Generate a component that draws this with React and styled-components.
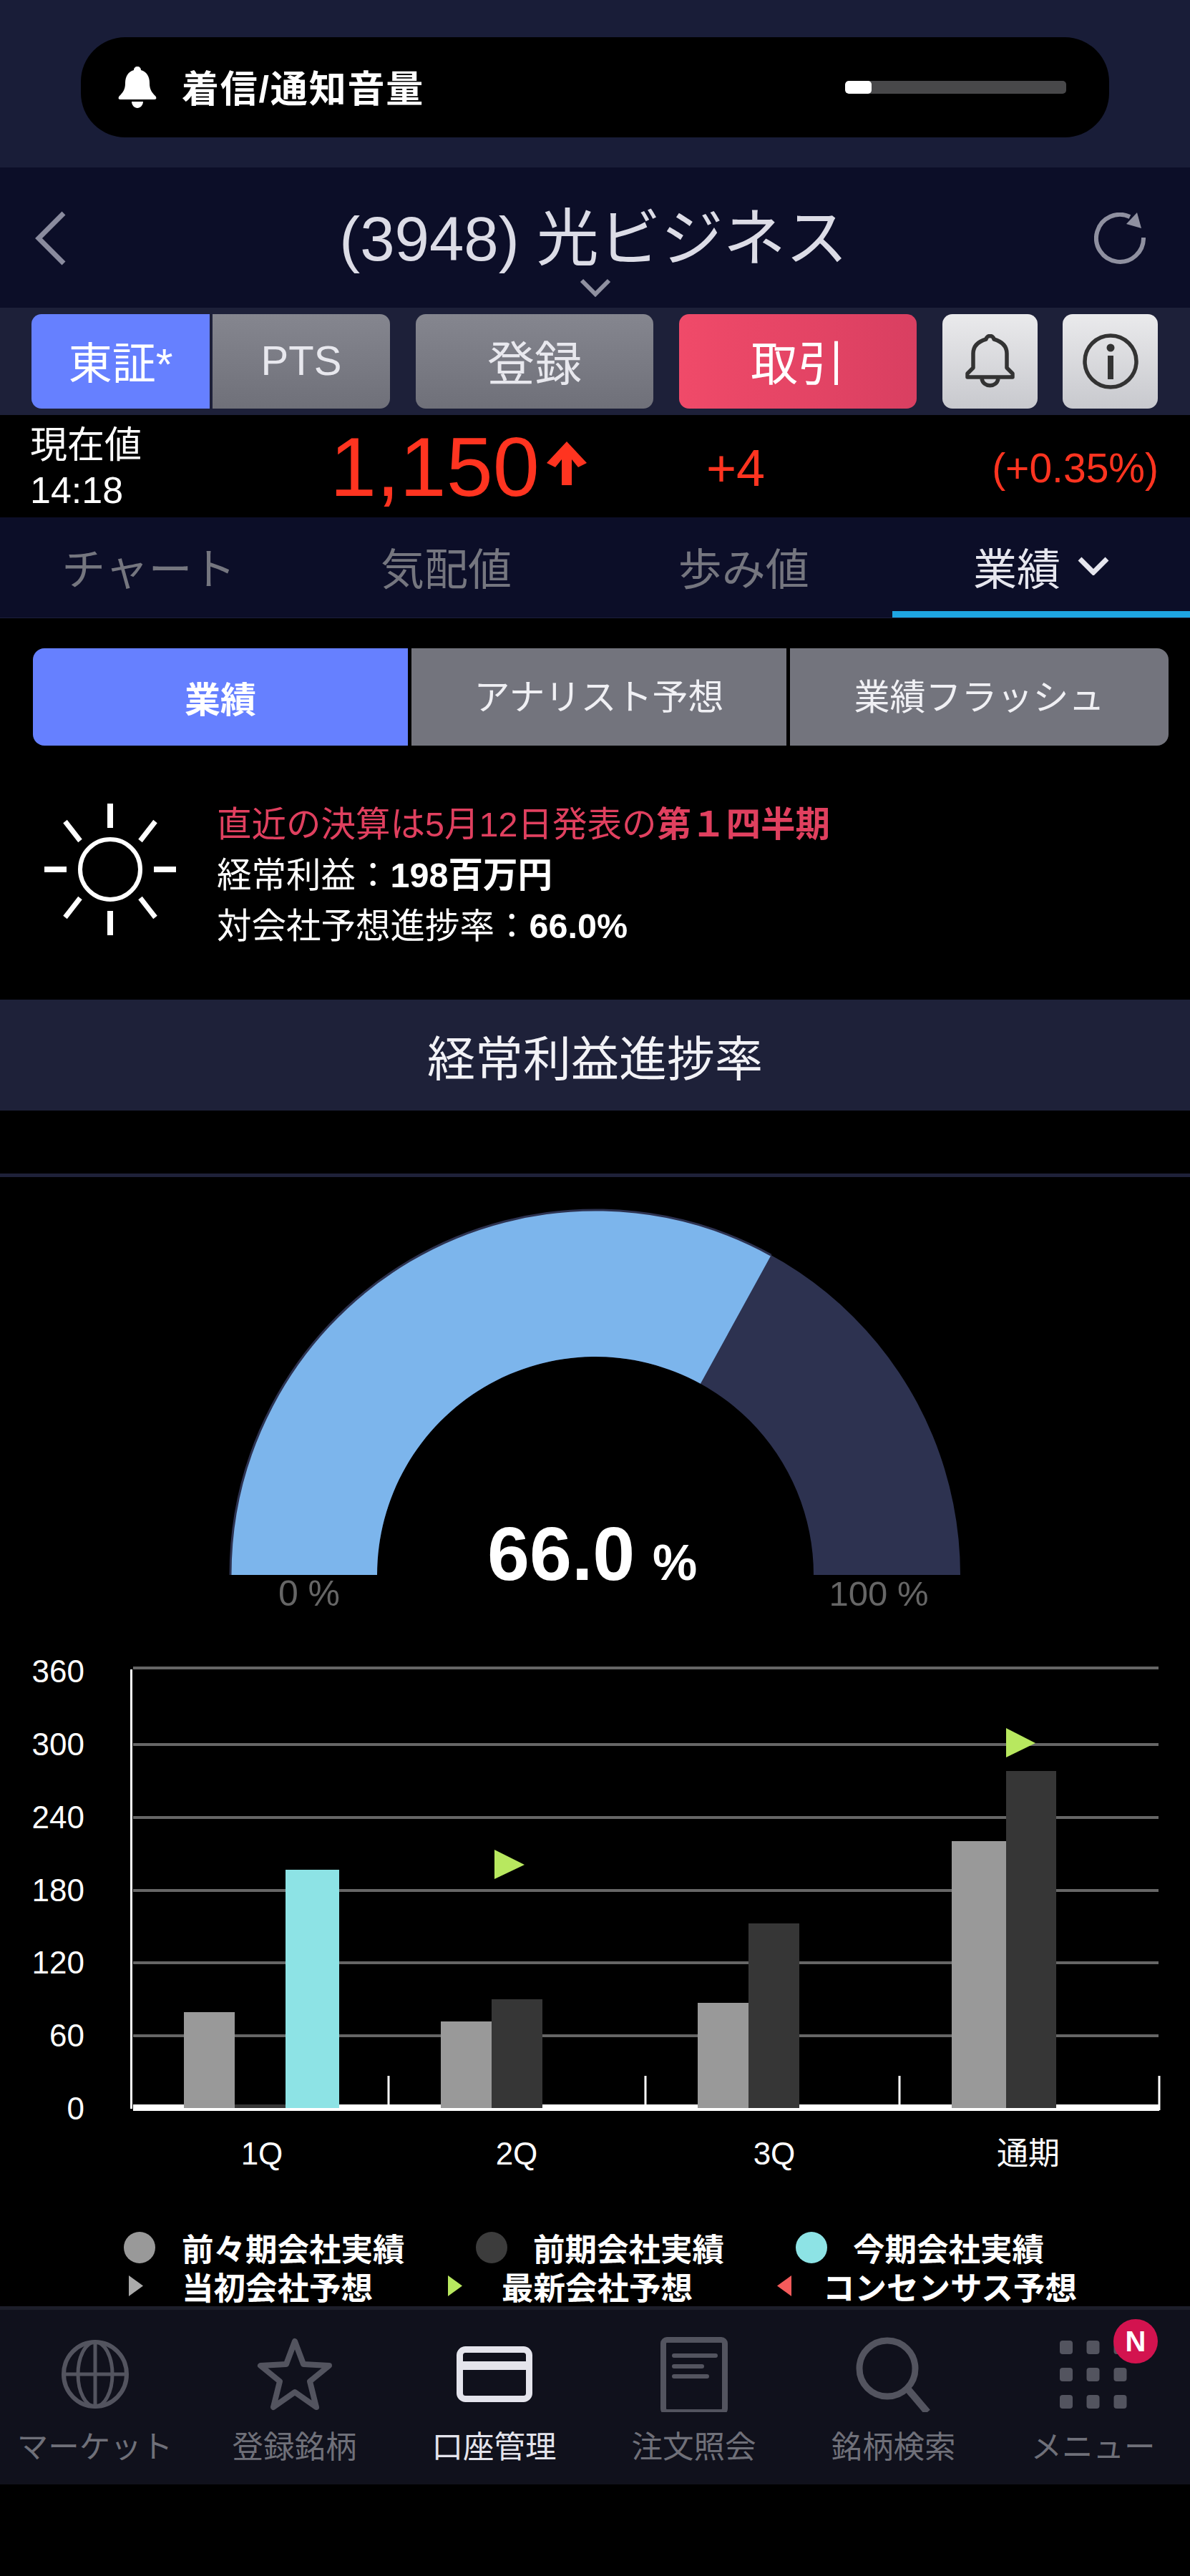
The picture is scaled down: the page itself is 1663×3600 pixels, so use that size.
import styled, { createGlobalStyle } from 'styled-components';

const FONT = '"Liberation Sans", "Noto Sans CJK JP", sans-serif';

const GlobalStyle = createGlobalStyle`
  html, body {
    margin: 0;
    background: #000;
  }
  body {
    font-family: ${FONT};
    color: #fff;
  }
  * {
    box-sizing: border-box;
  }
`;

const Page = styled.div`
  width: 1663px;
  min-height: 3600px;
  background: #000;
`;

/* ---- volume banner ---- */
const TopBand = styled.div`
  height: 234px;
  padding: 52px 113px 0;
  background: #191d38;
`;

const VolumePill = styled.div`
  height: 140px;
  display: flex;
  align-items: center;
  padding: 0 60px 0 51px;
  border-radius: 62px;
  background: #000;
`;

const VolumeText = styled.span`
  margin: 0 0 4px 34px;
  font-size: 52px;
  font-weight: 700;
  letter-spacing: 1.8px;
  white-space: nowrap;
`;

const VolumeTrack = styled.div`
  width: 309px;
  height: 18px;
  margin-left: auto;
  border-radius: 5px;
  background: #48484a;
  overflow: hidden;
`;

const VolumeFill = styled.div`
  height: 100%;
  border-radius: 5px;
  background: #fff;
`;

/* ---- stock header ---- */
const Header = styled.div`
  height: 196px;
  display: grid;
  grid-template-columns: 1fr auto 1fr;
  padding: 45px 62px 0;
  background: #0c0e28;
`;

const BackIcon = styled.svg`
  width: 44px;
  height: 76px;
  margin: 16px 0 0 -14px;
  justify-self: start;
`;

const RefreshIcon = styled.svg`
  width: 72px;
  height: 72px;
  margin-top: 18px;
  justify-self: end;
`;

const TitleColumn = styled.div`
  display: flex;
  flex-direction: column;
  align-items: center;
`;

const StockTitle = styled.div`
  margin-right: 4px;
  font-size: 87px;
  line-height: 110px;
  color: #dcdce6;
  white-space: nowrap;
`;

const ChevronSmall = styled.svg`
  width: 44px;
  height: 26px;
`;

/* ---- action buttons ---- */
const ActionRow = styled.div`
  height: 150px;
  display: flex;
  padding: 9px 45px 0 44px;
  background: #1d2039;
`;

const ActionButton = styled.div`
  width: ${(p) => p.$width}px;
  height: 132px;
  margin-left: ${(p) => p.$gap || 0}px;
  padding-bottom: ${(p) => (p.$tone === 'light' ? 0 : 4)}px;
  display: flex;
  align-items: center;
  justify-content: center;
  font-size: ${(p) => p.$size || 66}px;
  color: ${(p) => (p.$tone === 'gray' ? '#e8e8ee' : '#fff')};
  border-radius: ${(p) => p.$radius || '14px'};
  background: ${(p) =>
    p.$tone === 'blue'
      ? '#6680ff'
      : p.$tone === 'red'
        ? 'linear-gradient(90deg, #f04a69, #d93f61)'
        : p.$tone === 'light'
          ? 'linear-gradient(180deg, #eaeaec, #c8c9ce)'
          : 'linear-gradient(180deg, #85868f, #6f7079)'};
`;

/* ---- price row ---- */
const PriceRow = styled.div`
  height: 143px;
  display: grid;
  grid-template-columns: 419px 526px 1fr;
  align-items: center;
  padding: 0 44px 0 42px;
  background: #000;
`;

const PriceLabel = styled.div`
  font-size: 52px;
  line-height: 63px;
  margin-top: 5px;
`;

const PriceValue = styled.div`
  display: flex;
  align-items: center;
  margin-top: 3px;
  font-size: 117px;
  line-height: 130px;
  color: #ff3420;
`;

const UpArrow = styled.svg`
  width: 56px;
  height: 61px;
  margin: 0 0 12px 10px;
`;

const ChangeGroup = styled.div`
  display: flex;
  justify-content: space-between;
  align-items: center;
  margin-top: 4px;
  color: #ff3420;
`;

const ChangeValue = styled.span`
  font-size: ${(p) => p.$size}px;
`;

/* ---- tabs ---- */
const TabRow = styled.div`
  height: 141px;
  display: grid;
  grid-template-columns: repeat(4, 1fr);
  background: #0c0e28;
  border-bottom: 1px solid #1c1f3b;
`;

const Tab = styled.div`
  display: flex;
  align-items: center;
  justify-content: center;
  gap: 24px;
  padding-top: 5px;
  font-size: 61px;
  color: ${(p) => (p.$active ? '#e6e6ee' : '#75767f')};
  border-bottom: 9px solid ${(p) => (p.$active ? '#1ea5e2' : 'transparent')};
`;

const TabChevron = styled.svg`
  width: 44px;
  height: 26px;
`;

/* ---- segment ---- */
const Segment = styled.div`
  display: flex;
  gap: 5px;
  margin: 42px 30px 0 46px;
`;

const SegmentItem = styled.div`
  width: ${(p) => p.$width}px;
  height: 136px;
  display: flex;
  align-items: center;
  justify-content: center;
  font-size: 50px;
  font-weight: ${(p) => (p.$active ? 700 : 400)};
  color: ${(p) => (p.$active ? '#fff' : '#f0f0f4')};
  padding-bottom: ${(p) => (p.$active ? 0 : 8)}px;
  background: ${(p) => (p.$active ? '#6680ff' : '#73747d')};
  border-radius: ${(p) => p.$radius};
`;

/* ---- info ---- */
const InfoBlock = styled.div`
  height: 355px;
  display: flex;
  align-items: flex-start;
  gap: 56px;
  padding: 75px 0 0 61px;
`;

const SunIcon = styled.svg`
  width: 186px;
  height: 186px;
  margin-top: 5px;
  flex: none;
`;

const InfoLine = styled.div`
  font-size: 48.5px;
  line-height: 71px;
  white-space: nowrap;
  color: ${(p) => p.$color || '#fff'};
`;

const Strong = styled.b`
  font-weight: 700;
`;

const SectionTitle = styled.div`
  height: 155px;
  display: flex;
  align-items: center;
  justify-content: center;
  font-size: 67px;
  color: #f2f2f6;
  background: #1e2139;
`;

const Divider = styled.div`
  height: 5px;
  margin-top: 88px;
  background: #1e2139;
`;

/* ---- gauge and bar chart ---- */
const Drawing = styled.svg`
  display: block;
  width: 1663px;
  height: ${(p) => p.$height}px;
`;

const ChartText = styled.text`
  font-family: ${FONT};
  font-size: ${(p) => p.$size}px;
  font-weight: ${(p) => p.$weight || 400};
  fill: ${(p) => p.$color || '#fff'};
`;

/* ---- legend ---- */
const Legend = styled.div`
  margin-bottom: 7px;
`;

const LegendRow = styled.div`
  display: grid;
  grid-template-columns: ${(p) => p.$columns};
  padding-left: ${(p) => p.$left}px;
  height: 54px;
`;

const LegendItem = styled.div`
  display: flex;
  align-items: center;
  gap: ${(p) => p.$gap}px;
  font-size: 44.5px;
  font-weight: 700;
  white-space: nowrap;
`;

const LegendDot = styled.span`
  width: 44px;
  height: 44px;
  border-radius: 50%;
  background: ${(p) => p.$color};
`;

const LegendTriangle = styled.span`
  width: 20px;
  height: 29px;
  background: ${(p) => p.$color};
  clip-path: ${(p) =>
    p.$left
      ? 'polygon(100% 0, 100% 100%, 0 50%)'
      : 'polygon(0 0, 100% 50%, 0 100%)'};
`;

/* ---- bottom nav ---- */
const BottomBar = styled.div`
  height: 249px;
  background: #10111c;
  border-top: 5px solid #1c1e2a;
  overflow: hidden;
`;

const NavGrid = styled.div`
  display: grid;
  grid-template-columns: repeat(6, 279px);
  margin-left: -7px;
`;

const NavItem = styled.div`
  position: relative;
  display: flex;
  flex-direction: column;
  align-items: center;
  color: ${(p) => (p.$active ? '#e4e4ec' : '#6f7079')};
`;

const NavIconSlot = styled.div`
  height: 110px;
  margin-top: 35px;
  display: flex;
  align-items: center;
  justify-content: center;
`;

const NavLabel = styled.div`
  margin-top: 22px;
  font-size: 43.5px;
  line-height: 50px;
  white-space: nowrap;
`;

const Badge = styled.span`
  position: absolute;
  top: 13px;
  left: 168px;
  width: 62px;
  height: 62px;
  display: flex;
  align-items: center;
  justify-content: center;
  border-radius: 50%;
  background: #d3134f;
  color: #fff;
  font-size: 40px;
  font-weight: 700;
`;

const ICON = '#53545f';

const VolumeBell = () => (
  <svg width="56" height="58" viewBox="0 0 56 58">
    <path
      fill="#fff"
      d="M28 0c3 0 5 2 5 5 8 2 12 9 12 18 0 9 3 13 8 18 2 2 2 5-1 5H4c-3 0-3-3-1-5 5-5 8-9 8-18 0-9 4-16 12-18 0-3 2-5 5-5zM20 49h16c0 5-4 9-8 9s-8-4-8-9z"
    />
  </svg>
);

const OutlineBell = () => (
  <svg width="69" height="76" viewBox="0 0 69 76" fill="none" stroke="#333" strokeWidth="5.5" strokeLinejoin="round">
    <path d="M3 60H66V55L58 47V27C58 16 50 10 40 7C39 1 30 1 29 7C19 10 11 16 11 27V47L3 55Z" />
    <path d="M23 62C25 75 44 75 46 62" />
  </svg>
);

const InfoIcon = () => (
  <svg width="80" height="80" viewBox="0 0 80 80" fill="none">
    <circle cx="40" cy="40" r="36" stroke="#333" strokeWidth="5.5" />
    <circle cx="40" cy="21" r="5.5" fill="#333" />
    <rect x="36" y="32" width="8" height="33" fill="#333" />
  </svg>
);

const Globe = () => (
  <svg width="94" height="96" viewBox="0 0 94 96" fill="none" stroke={ICON} strokeWidth="5">
    <ellipse cx="47" cy="48" rx="44" ry="45" strokeWidth="6" />
    <ellipse cx="47" cy="48" rx="24" ry="45" />
    <path d="M47 3V93M3 48H91" />
  </svg>
);

const Star = () => (
  <svg width="106" height="102" viewBox="0 0 106 102" fill="none" stroke={ICON} strokeWidth="8" strokeLinejoin="round">
    <path d="M53 5L65 37L101 39L74 61L83 97L53 76L23 97L32 61L5 39L41 37Z" />
  </svg>
);

const Card = ({ color }) => (
  <svg width="106" height="78" viewBox="0 0 106 78" fill="none" stroke={color} strokeWidth="9">
    <rect x="4.5" y="4.5" width="97" height="69" rx="8" />
    <path d="M4 27H102" strokeWidth="12" />
  </svg>
);

const Doc = () => (
  <svg width="94" height="105" viewBox="0 0 94 105" fill="none" stroke={ICON}>
    <rect x="4" y="4" width="86" height="101" rx="5" strokeWidth="8" />
    <path d="M19 26H77M19 41H58M19 55H65" strokeWidth="6" strokeLinecap="round" />
  </svg>
);

const Search = () => (
  <svg width="106" height="105" viewBox="0 0 106 105" fill="none" stroke={ICON} strokeWidth="9">
    <circle cx="44" cy="44" r="39" />
    <path d="M72 72L100 105" strokeWidth="10" />
  </svg>
);

const MenuDots = () => (
  <svg width="94" height="95" viewBox="0 0 94 95" fill={ICON}>
    {[0, 38, 76].map((y) =>
      [0, 37.5, 75.5].map((x) => (
        <rect key={`${x}-${y}`} x={x} y={y} width="18" height="19" rx="4" />
      )),
    )}
  </svg>
);

const Sun = () => {
  const c = 93;
  return (
    <SunIcon viewBox="0 0 186 186" fill="none" stroke="#fff">
      <circle cx={c} cy={c} r="42" strokeWidth="6" />
      <path d={`M${c} 1V35M${c} 151V185M1 ${c}H32M154 ${c}H185`} strokeWidth="8" />
      <path
        d={`M${c + 63} ${c - 67}L${c + 42} ${c - 40}M${c - 63} ${c - 67}L${c - 42} ${c - 40}M${c + 63} ${c + 67}L${c + 42} ${c + 40}M${c - 63} ${c + 67}L${c - 42} ${c + 40}`}
        strokeWidth="7"
      />
    </SunIcon>
  );
};

// gauge geometry, in page coordinates
const CX = 832;
const CY = 2201;
const RO = 510;
const RI = 305;
const PCT = 0.66;

const polar = (r, t) => {
  const a = Math.PI * t;
  return [CX - r * Math.cos(a), CY - r * Math.sin(a)];
};

const band = (from, to) => {
  const [x1, y1] = polar(RO, from);
  const [x2, y2] = polar(RO, to);
  const [x3, y3] = polar(RI, to);
  const [x4, y4] = polar(RI, from);
  return `M${x1} ${y1}A${RO} ${RO} 0 0 1 ${x2} ${y2}L${x3} ${y3}A${RI} ${RI} 0 0 0 ${x4} ${y4}Z`;
};

const GRID = [2331, 2438, 2540, 2642, 2743, 2845];
const Y_LABELS = [
  ['360', 2351],
  ['300', 2453],
  ['240', 2555],
  ['180', 2657],
  ['120', 2758],
  ['60', 2860],
  ['0', 2962],
];
const BARS = [
  { x: 257, w: 71, top: 2812, fill: '#999999' },
  { x: 328, w: 71, top: 2941, fill: '#363636' },
  { x: 399, w: 75, top: 2613, fill: '#8de3e5' },
  { x: 616, w: 71, top: 2825, fill: '#999999' },
  { x: 687, w: 71, top: 2794, fill: '#363636' },
  { x: 975, w: 71, top: 2799, fill: '#999999' },
  { x: 1046, w: 71, top: 2688, fill: '#363636' },
  { x: 1330, w: 76, top: 2573, fill: '#999999' },
  { x: 1406, w: 70, top: 2475, fill: '#363636' },
];
const X_LABELS = [
  ['1Q', 366],
  ['2Q', 722],
  ['3Q', 1082],
  ['通期', 1437],
];
const TICKS = [543, 902, 1257, 1620];

const Chart = () => (
  <Drawing $height={808} viewBox="0 2300 1663 808">
    {GRID.map((y) => (
      <rect key={y} x="186" y={y - 2} width="1433" height="4" fill="#666" />
    ))}
    <rect x="182" y="2333" width="3" height="614" fill="#fff" />
    <rect x="186" y="2941" width="1434" height="9" fill="#fff" />
    {TICKS.map((x) => (
      <rect key={x} x={x - 1.5} y="2901" width="3" height="48" fill="#fff" />
    ))}
    {BARS.map((b) => (
      <rect key={b.x} x={b.x} y={b.top} width={b.w} height={2946 - b.top} fill={b.fill} />
    ))}
    <polygon points="691,2585 733,2606 691,2626" fill="#b8e85f" />
    <polygon points="1406,2415 1447,2436 1406,2456" fill="#b8e85f" />
    {Y_LABELS.map(([t, y]) => (
      <ChartText key={t} x="118" y={y} textAnchor="end" $size={44}>
        {t}
      </ChartText>
    ))}
    {X_LABELS.map(([t, x]) => (
      <ChartText key={t} x={x} y="3025" textAnchor="middle" $size={44}>
        {t}
      </ChartText>
    ))}
  </Drawing>
);

const Gauge = () => (
  <Drawing $height={655} viewBox="0 1645 1663 655">
    <path d={band(0, 1)} fill="#2d3250" />
    <path d={band(0, PCT)} fill="#7cb5ec" />
    <path d={`M${CX - RO} ${CY}A${RO} ${RO} 0 0 1 ${polar(RO, PCT).join(' ')}`} fill="none" stroke="#2d3250" strokeWidth="3" />
    <ChartText x="432" y="2244" textAnchor="middle" $size={50} $color="#666">
      0 %
    </ChartText>
    <ChartText x="1228" y="2244" textAnchor="middle" $size={49} $color="#666">
      100 %
    </ChartText>
    <ChartText x="681" y="2208" $size={106} $weight={700}>
      66.0
    </ChartText>
    <ChartText x="912" y="2208" $size={70} $weight={700}>
      %
    </ChartText>
  </Drawing>
);

const NAV = [
  { label: 'マーケット', icon: <Globe /> },
  { label: '登録銘柄', icon: <Star /> },
  { label: '口座管理', icon: <Card color="#e4e4ec" />, active: true },
  { label: '注文照会', icon: <Doc /> },
  { label: '銘柄検索', icon: <Search /> },
  { label: 'メニュー', icon: <MenuDots />, badge: 'N' },
];

export default function App() {
  return (
    <Page>
      <GlobalStyle />
      <TopBand>
        <VolumePill>
          <VolumeBell />
          <VolumeText>着信/通知音量</VolumeText>
          <VolumeTrack>
            <VolumeFill style={{ width: `${(37 / 309) * 100}%` }} />
          </VolumeTrack>
        </VolumePill>
      </TopBand>

      <Header>
        <BackIcon viewBox="0 0 44 76" fill="none" stroke="#8a8b9e" strokeWidth="7">
          <path d="M41 3L6 38L41 73" />
        </BackIcon>
        <TitleColumn>
          <StockTitle>(3948) 光ビジネス</StockTitle>
          <ChevronSmall viewBox="0 0 44 26" fill="none" stroke="#8f90a0" strokeWidth="6">
            <path d="M3 3L22 22L41 3" />
          </ChevronSmall>
        </TitleColumn>
        <RefreshIcon viewBox="0 0 72 72" fill="none" stroke="#8f90a0">
          <path d="M69 35A33 33 0 1 1 50 6" strokeWidth="6" />
          <polygon points="60,0 66,22 45,16" fill="#8f90a0" stroke="none" />
        </RefreshIcon>
      </Header>

      <ActionRow>
        <ActionButton $width={249} $tone="blue" $size={61} $radius="14px 0 0 14px">
          東証*
        </ActionButton>
        <ActionButton $width={248} $gap={4} $size={58} $tone="gray" $radius="0 14px 14px 0">
          PTS
        </ActionButton>
        <ActionButton $width={332} $gap={36} $tone="gray">
          登録
        </ActionButton>
        <ActionButton $width={332} $gap={36} $tone="red">
          取引
        </ActionButton>
        <ActionButton $width={133} $gap={36} $tone="light">
          <OutlineBell />
        </ActionButton>
        <ActionButton $width={133} $gap={35} $tone="light">
          <InfoIcon />
        </ActionButton>
      </ActionRow>

      <PriceRow>
        <PriceLabel>
          現在値
          <br />
          14:18
        </PriceLabel>
        <PriceValue>
          1,150
          <UpArrow viewBox="0 0 56 61" fill="#ff3420">
            <polygon points="28,0 56,30 44,36 35,25 35,61 21,61 21,25 12,36 0,30" />
          </UpArrow>
        </PriceValue>
        <ChangeGroup>
          <ChangeValue $size={72}>+4</ChangeValue>
          <ChangeValue $size={57}>(+0.35%)</ChangeValue>
        </ChangeGroup>
      </PriceRow>

      <TabRow>
        <Tab>チャート</Tab>
        <Tab>気配値</Tab>
        <Tab>歩み値</Tab>
        <Tab $active>
          業績
          <TabChevron viewBox="0 0 44 26" fill="none" stroke="#e6e6ee" strokeWidth="7">
            <path d="M3 3L22 22L41 3" />
          </TabChevron>
        </Tab>
      </TabRow>

      <Segment>
        <SegmentItem $width={524} $active $radius="16px 0 0 16px">
          業績
        </SegmentItem>
        <SegmentItem $width={524} $radius="0">
          アナリスト予想
        </SegmentItem>
        <SegmentItem $width={529} $radius="0 16px 16px 0">
          業績フラッシュ
        </SegmentItem>
      </Segment>

      <InfoBlock>
        <Sun />
        <div>
          <InfoLine $color="#e0405f">
            直近の決算は5月12日発表の<Strong>第１四半期</Strong>
          </InfoLine>
          <InfoLine>
            経常利益：<Strong>198百万円</Strong>
          </InfoLine>
          <InfoLine>
            対会社予想進捗率：<Strong>66.0%</Strong>
          </InfoLine>
        </div>
      </InfoBlock>

      <SectionTitle>経常利益進捗率</SectionTitle>
      <Divider />

      <Gauge />
      <Chart />

      <Legend>
        <LegendRow $left={173} $columns="492px 447px 1fr">
          <LegendItem $gap={37}>
            <LegendDot $color="#999" />
            前々期会社実績
          </LegendItem>
          <LegendItem $gap={36}>
            <LegendDot $color="#3c3c3c" />
            前期会社実績
          </LegendItem>
          <LegendItem $gap={36}>
            <LegendDot $color="#8de3e5" />
            今期会社実績
          </LegendItem>
        </LegendRow>
        <LegendRow $left={180} $columns="446px 460px 1fr">
          <LegendItem $gap={54}>
            <LegendTriangle $color="#aaa" />
            当初会社予想
          </LegendItem>
          <LegendItem $gap={55}>
            <LegendTriangle $color="#b8e85f" />
            最新会社予想
          </LegendItem>
          <LegendItem $gap={44}>
            <LegendTriangle $color="#f45b5b" $left />
            コンセンサス予想
          </LegendItem>
        </LegendRow>
      </Legend>

      <BottomBar>
        <NavGrid>
          {NAV.map((item) => (
            <NavItem key={item.label} $active={item.active}>
              <NavIconSlot>{item.icon}</NavIconSlot>
              <NavLabel>{item.label}</NavLabel>
              {item.badge && <Badge>{item.badge}</Badge>}
            </NavItem>
          ))}
        </NavGrid>
      </BottomBar>
    </Page>
  );
}
